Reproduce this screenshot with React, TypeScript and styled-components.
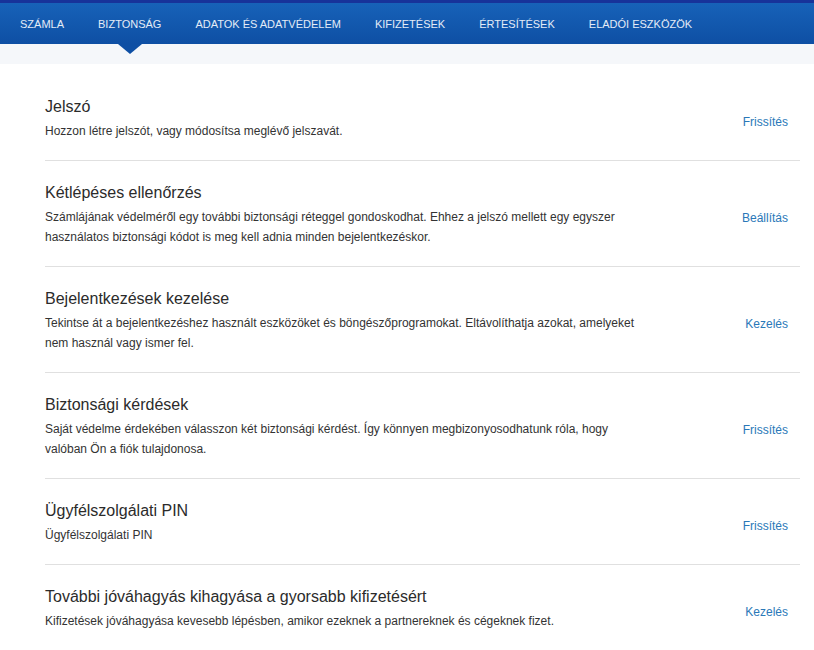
import React from "react";
import styled, { createGlobalStyle } from "styled-components";

const GlobalStyle = createGlobalStyle`
  body {
    margin: 0;
    background: #ffffff;
    font-family: "Liberation Sans", Arial, sans-serif;
    color: #333333;
  }
`;

const TopBar = styled.nav`
  display: flex;
  align-items: center;
  height: 41px;
  padding: 0 3px;
  border-top: 3px solid #17339a;
  background: linear-gradient(#1762b8, #0e4fa4);
`;

const NavItem = styled.a<{ $active?: boolean }>`
  position: relative;
  display: flex;
  align-items: center;
  height: 100%;
  padding: 0 17px;
  font-size: 11px;
  letter-spacing: 0;
  text-transform: uppercase;
  color: #e4ecf7;
  cursor: pointer;

  &::after {
    content: "";
    display: ${(p) => (p.$active ? "block" : "none")};
    position: absolute;
    left: 50%;
    bottom: -10px;
    margin-left: -12px;
    border-left: 12px solid transparent;
    border-right: 12px solid transparent;
    border-top: 10px solid #0e4fa4;
  }
`;

const SubStrip = styled.div`
  height: 20px;
  background: #f5f7fa;
`;

const List = styled.div`
  display: flex;
  flex-direction: column;
  margin: 11px 14px 0 45px;
`;

const Row = styled.div`
  display: flex;
  align-items: center;
  justify-content: space-between;
  padding: 22px 12px 19px 0;
  border-bottom: 1px solid #e0e0e0;
`;

const Info = styled.div`
  display: flex;
  flex-direction: column;
  gap: 4px;
  max-width: 605px;
`;

const Title = styled.div`
  font-size: 16px;
  line-height: 20px;
  color: #2b2b2b;
`;

const Desc = styled.div`
  font-size: 12px;
  line-height: 20px;
  color: #333333;
`;

const Action = styled.a`
  margin-top: 6px;
  font-size: 12px;
  color: #2a78b8;
  cursor: pointer;
`;

const tabs = [
  "Számla",
  "Biztonság",
  "Adatok és adatvédelem",
  "Kifizetések",
  "Értesítések",
  "Eladói eszközök",
];

const items = [
  {
    title: "Jelszó",
    desc: "Hozzon létre jelszót, vagy módosítsa meglévő jelszavát.",
    action: "Frissítés",
  },
  {
    title: "Kétlépéses ellenőrzés",
    desc: "Számlájának védelméről egy további biztonsági réteggel gondoskodhat. Ehhez a jelszó mellett egy egyszer használatos biztonsági kódot is meg kell adnia minden bejelentkezéskor.",
    action: "Beállítás",
  },
  {
    title: "Bejelentkezések kezelése",
    desc: "Tekintse át a bejelentkezéshez használt eszközöket és böngészőprogramokat. Eltávolíthatja azokat, amelyeket nem használ vagy ismer fel.",
    action: "Kezelés",
  },
  {
    title: "Biztonsági kérdések",
    desc: "Saját védelme érdekében válasszon két biztonsági kérdést. Így könnyen megbizonyosodhatunk róla, hogy valóban Ön a fiók tulajdonosa.",
    action: "Frissítés",
  },
  {
    title: "Ügyfélszolgálati PIN",
    desc: "Ügyfélszolgálati PIN",
    action: "Frissítés",
  },
  {
    title: "További jóváhagyás kihagyása a gyorsabb kifizetésért",
    desc: "Kifizetések jóváhagyása kevesebb lépésben, amikor ezeknek a partnereknek és cégeknek fizet.",
    action: "Kezelés",
  },
];

const App = () => {
  return (
    <>
      <GlobalStyle />
      <TopBar>
        {tabs.map((t) => (
          <NavItem key={t} $active={t === "Biztonság"}>
            {t}
          </NavItem>
        ))}
      </TopBar>
      <SubStrip />
      <List>
        {items.map((it) => (
          <Row key={it.title}>
            <Info>
              <Title>{it.title}</Title>
              <Desc>{it.desc}</Desc>
            </Info>
            <Action>{it.action}</Action>
          </Row>
        ))}
      </List>
    </>
  );
};

export default App;
